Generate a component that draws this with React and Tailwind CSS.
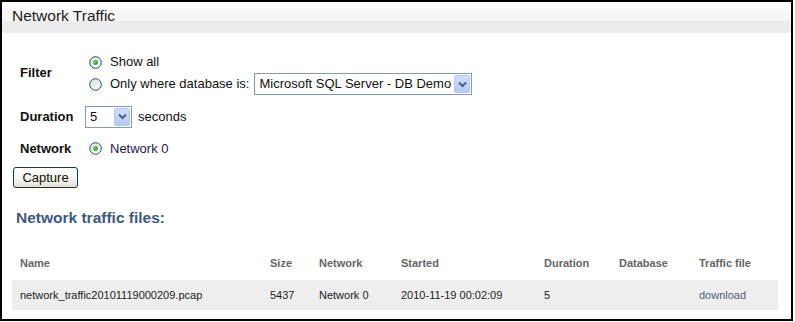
import React from "react";

// ─── XP style radio ───────────────────────────────────────────────────────────
function Radio({ checked }) {
  return (
    <svg width="13" height="13" viewBox="0 0 13 13" className="shrink-0">
      <defs>
        <linearGradient id="rg" x1="0" y1="0" x2="1" y2="1">
          <stop offset="0" stopColor="#dcdcd4" />
          <stop offset="1" stopColor="#ffffff" />
        </linearGradient>
        <radialGradient id="dot" cx="0.4" cy="0.4" r="0.6">
          <stop offset="0" stopColor="#6fd36f" />
          <stop offset="1" stopColor="#1f9a1f" />
        </radialGradient>
      </defs>
      <circle cx="6.5" cy="6.5" r="5.8" fill="url(#rg)" stroke="#1c5180" strokeWidth="1" />
      {checked && <circle cx="6.5" cy="6.5" r="2.4" fill="url(#dot)" />}
    </svg>
  );
}

// ─── select with XP arrow button ──────────────────────────────────────────────
function Select({ value, className }) {
  return (
    <div
      className={`flex items-center justify-between border border-[#7f9db9] bg-white pl-[4px] pr-[1px] ${className}`}
    >
      <span className="text-[13px] text-[#111] whitespace-nowrap">{value}</span>
      <span className="flex items-center justify-center w-[16px] h-[18px] rounded-[2px] border border-[#b5c8f3] bg-[linear-gradient(to_bottom,#d2def9,#b5c9f7)]">
        <svg width="9" height="7" viewBox="0 0 9 7">
          <path d="M1 1.5 L4.5 5 L8 1.5" fill="none" stroke="#4d6185" strokeWidth="2" />
        </svg>
      </span>
    </div>
  );
}

const cols = "grid grid-cols-[250px_49px_82px_143px_75px_80px_87px]";

export default function App() {
  return (
    <div className="w-[795px] h-[322px] bg-white font-['Liberation_Sans',Arial,sans-serif]">
      <div className="w-[793px] h-[321px] border-2 border-black">
        {/* title band */}
        <div className="mt-[7px] h-[24px] bg-[linear-gradient(to_bottom,#f6f6f6_50%,#ececec_50%)] pl-[10px]">
          <div className="text-[15.5px] leading-[13px] text-[#222]">Network Traffic</div>
        </div>

        {/* form */}
        <div className="mt-[18px] pl-[18px] text-[13px] text-[#111]">
          <div className="flex">
            <div className="w-[69px] flex items-center font-bold">Filter</div>
            <div className="flex flex-col">
              <div className="h-[22px] flex items-center gap-[8px]">
                <Radio checked />
                <span>Show all</span>
              </div>
              <div className="h-[22px] flex items-center">
                <Radio />
                <span className="ml-[8px]">Only where database is:</span>
                <Select value="Microsoft SQL Server - DB Demo" className="ml-[5px] w-[218px] h-[22px]" />
              </div>
            </div>
          </div>

          <div className="mt-[11px] h-[21px] flex items-center">
            <div className="w-[65px] font-bold">Duration</div>
            <Select value="5" className="w-[47px] h-[22px]" />
            <span className="ml-[6px]">seconds</span>
          </div>

          <div className="mt-[11px] h-[21px] flex items-center">
            <div className="w-[69px] font-bold">Network</div>
            <Radio checked />
            <span className="ml-[8px] text-[#2a1450]">Network 0</span>
          </div>
        </div>

        <div className="flex pl-[11px] mt-[8px]">
          <button className="w-[65px] h-[21px] rounded-[3px] border border-[#003c74] bg-[linear-gradient(to_bottom,#ffffff,#f3f1e6_70%,#e3e0d0)] text-[13px] text-[#111] leading-none">
            Capture
          </button>
        </div>

        <h2 className="mt-[20px] pl-[14px] text-[15.5px] leading-[20px] font-bold text-[#3f5882]">
          Network traffic files:
        </h2>

        {/* files table */}
        <div className="mt-[20px] pl-[10px] w-[776px] text-[11px]">
          <div className={`${cols} h-[30px] items-center font-bold text-[#666]`}>
            <div className="pl-[8px]">Name</div>
            <div className="pl-[8px]">Size</div>
            <div className="pl-[8px]">Network</div>
            <div className="pl-[8px]">Started</div>
            <div className="pl-[8px]">Duration</div>
            <div className="pl-[8px]">Database</div>
            <div className="pl-[8px]">Traffic file</div>
          </div>
          <div className={`${cols} mt-[2px] h-[30px] items-center bg-[#eeeeee] text-[#222]`}>
            <div className="pl-[8px]">network_traffic20101119000209.pcap</div>
            <div className="pl-[8px]">5437</div>
            <div className="pl-[8px]">Network 0</div>
            <div className="pl-[8px]">2010-11-19 00:02:09</div>
            <div className="pl-[8px]">5</div>
            <div className="pl-[8px]"></div>
            <div className="pl-[8px] text-[#4a5f85]">download</div>
          </div>
        </div>
      </div>
    </div>
  );
}
